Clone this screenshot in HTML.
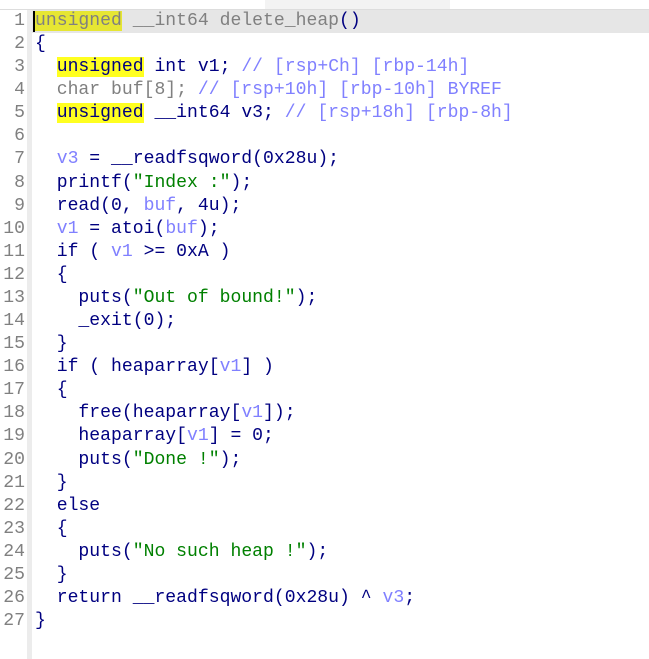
<!DOCTYPE html><html><head><style>
body{margin:0;width:649px;height:659px;background:#fff;overflow:hidden;position:relative;font-family:"Liberation Mono",monospace;font-size:18.1px}
.top{position:absolute;left:0;top:0;width:649px;height:9px;background:#f3f3f3;border-bottom:1px solid #ddd}
.tab{position:absolute;top:0;height:9px;background:#fff;border-right:1px solid #ccc}
.gut{position:absolute;left:27px;top:10px;width:5px;height:649px;background:#ececec}
.hl{position:absolute;left:32px;top:10px;width:617px;height:23px;background:#e6e6e6}
.cur{position:absolute;left:33px;top:11px;width:2px;height:21px;background:#000}
.ln{position:absolute;left:0;width:25px;text-align:right;color:#808080;line-height:23px}
.c{position:absolute;left:35px;white-space:pre;line-height:23px;color:#000080}
.v{color:#8080ff}.s{color:#008000}.k{background:#ffff20}.g{color:#808080}
</style></head><body>
<div class="top"><div class="tab" style="left:0;width:265px"></div><div class="tab" style="left:265px;width:185px;background:#f3f3f3"></div><div class="tab" style="left:450px;width:200px"></div></div>
<div class="gut"></div><div class="hl"></div>
<div id="l"></div>
<script>
var L=[
'<span class="g"><span class="k" style="background:#e6e633">unsigned</span> __int64 delete_heap</span>()',
'{',
'  <span class="k">unsigned</span> int v1; <span class="v">// [rsp+Ch] [rbp-14h]</span>',
'  <span class="g">char buf[8];</span> <span class="v">// [rsp+10h] [rbp-10h] BYREF</span>',
'  <span class="k">unsigned</span> __int64 v3; <span class="v">// [rsp+18h] [rbp-8h]</span>',
'',
'  <span class="v">v3</span> = __readfsqword(0x28u);',
'  printf(<span class="s">"Index :"</span>);',
'  read(0, <span class="v">buf</span>, 4u);',
'  <span class="v">v1</span> = atoi(<span class="v">buf</span>);',
'  if ( <span class="v">v1</span> >= 0xA )',
'  {',
'    puts(<span class="s">"Out of bound!"</span>);',
'    _exit(0);',
'  }',
'  if ( heaparray[<span class="v">v1</span>] )',
'  {',
'    free(heaparray[<span class="v">v1</span>]);',
'    heaparray[<span class="v">v1</span>] = 0;',
'    puts(<span class="s">"Done !"</span>);',
'  }',
'  else',
'  {',
'    puts(<span class="s">"No such heap !"</span>);',
'  }',
'  return __readfsqword(0x28u) ^ <span class="v">v3</span>;',
'}'];
var h='';for(var i=0;i<L.length;i++){var t=Math.round(10+i*23.08);h+='<div class="ln" style="top:'+t+'px">'+(i+1)+'</div><div class="c" style="top:'+t+'px">'+L[i]+'</div>';}
document.getElementById('l').innerHTML=h;
</script>
<div class="cur"></div>
</body></html>
